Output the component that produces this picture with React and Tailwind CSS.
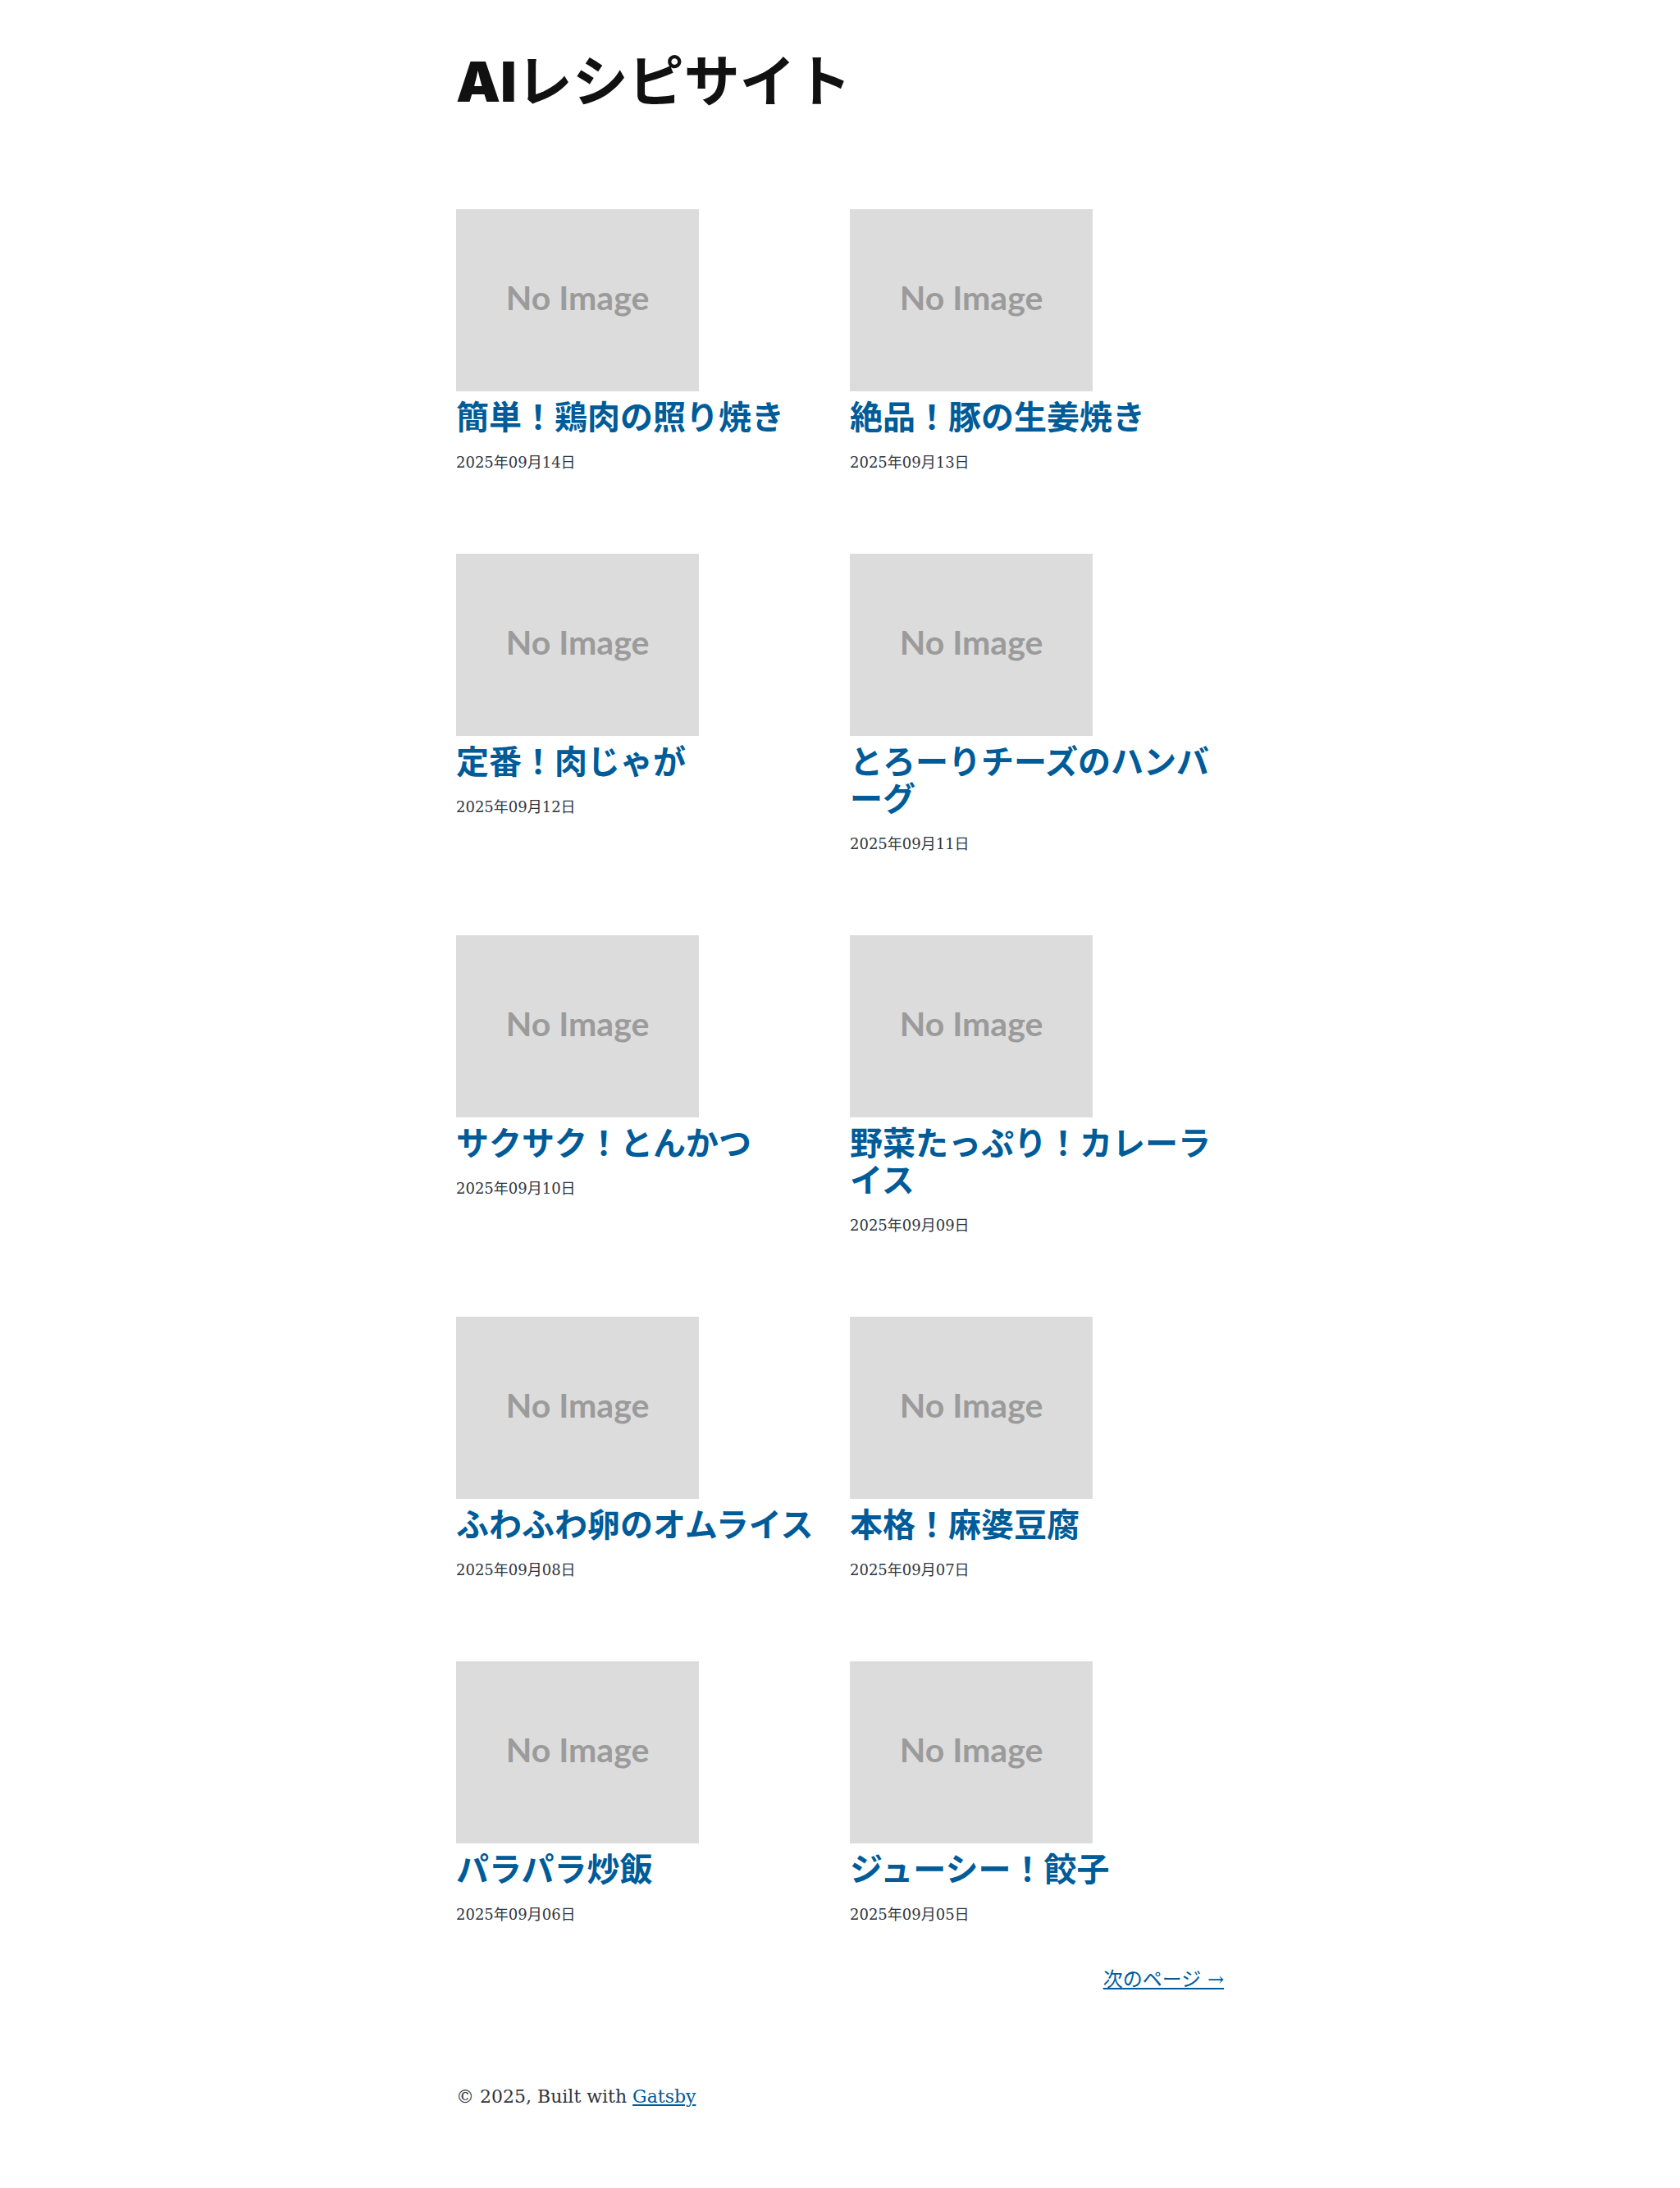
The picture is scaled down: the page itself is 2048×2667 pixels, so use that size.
const posts = [
  { title: "簡単！鶏肉の照り焼き", date: "2025年09月14日" },
  { title: "絶品！豚の生姜焼き", date: "2025年09月13日" },
  { title: "定番！肉じゃが", date: "2025年09月12日" },
  { title: "とろーりチーズのハンバーグ", date: "2025年09月11日" },
  { title: "サクサク！とんかつ", date: "2025年09月10日" },
  { title: "野菜たっぷり！カレーライス", date: "2025年09月09日" },
  { title: "ふわふわ卵のオムライス", date: "2025年09月08日" },
  { title: "本格！麻婆豆腐", date: "2025年09月07日" },
  { title: "パラパラ炒飯", date: "2025年09月06日" },
  { title: "ジューシー！餃子", date: "2025年09月05日" },
];

function NoImage() {
  return (
    <div className="flex h-[222px] w-[296px] items-center justify-center bg-[#dcdcdc] pb-[8px]">
      <span className="font-['Lato',sans-serif] text-[41px] leading-none font-bold text-[#9b9b9b]">
        No Image
      </span>
    </div>
  );
}

function PostItem({ post }) {
  return (
    <li>
      <article>
        <a href="#">
          <NoImage />
        </a>
        <h2 className="mt-[7px] font-['Noto_Sans_CJK_JP',sans-serif] text-[40px] leading-[45px] font-bold text-[#005b99]">
          <a href="#">{post.title}</a>
        </h2>
        <small className="mt-[20px] block font-['DejaVu_Serif','Noto_Sans_CJK_JP',serif] text-[18px] leading-[30px] text-[#2e353f]">
          {post.date}
        </small>
      </article>
    </li>
  );
}

export default function App() {
  return (
    <div className="min-h-[2667px] bg-white">
      <div className="mx-auto w-[936px] pt-[56px] pb-[80px]">
        <header>
          <h1 className="font-['Noto_Sans_CJK_JP',sans-serif] text-[68px] leading-[77px] font-bold text-[#111]">
            <span className="font-['Inter','Noto_Sans_CJK_JP',sans-serif] font-black">AI</span>
            レシピサイト
          </h1>
        </header>
        <main>
          <ol className="mt-[117px] grid list-none grid-cols-2 gap-x-[24px] gap-y-[96px]">
            {posts.map((post) => (
              <PostItem key={post.date} post={post} />
            ))}
          </ol>
          <nav className="mt-[47px] flex justify-end">
            <a
              href="#"
              className="font-['DejaVu_Serif','Noto_Sans_CJK_JP',serif] text-[24px] leading-[34px] text-[#005b99] underline"
            >
              次のページ →
            </a>
          </nav>
        </main>
        <footer className="mt-[109px] font-['DejaVu_Serif','Noto_Sans_CJK_JP',serif] text-[22px] leading-[33px] text-[#2e353f]">
          © 2025, Built with{" "}
          <a href="#" className="text-[#005b99] underline">
            Gatsby
          </a>
        </footer>
      </div>
    </div>
  );
}
